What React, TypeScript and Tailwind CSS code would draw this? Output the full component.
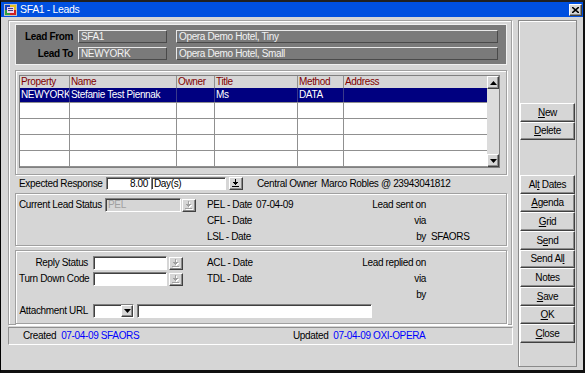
import React from "react";

const raised =
  "bg-[#d6d6d6] border border-t-white border-l-white border-r-[#404040] border-b-[#404040] shadow-[inset_-1px_-1px_0_#8c8c8c]";
const sunken =
  "border border-t-[#808080] border-l-[#808080] border-r-white border-b-white shadow-[inset_1px_1px_0_#404040]";
const etched =
  "border border-[#a0a0a0] shadow-[inset_1px_1px_0_#ffffff,1px_1px_0_#ffffff]";

function DropArrow({ disabled }: { disabled?: boolean }) {
  const c = disabled ? "#a0a0a0" : "#000000";
  return (
    <svg width="8" height="9" viewBox="0 0 8 9">
      {disabled && (
        <g fill="#ffffff" transform="translate(1,1)">
          <rect x="3" y="0" width="1" height="3" />
          <rect x="1" y="3" width="5" height="1" />
          <rect x="2" y="4" width="3" height="1" />
          <rect x="3" y="5" width="1" height="1" />
          <rect x="0" y="7" width="7" height="1" />
        </g>
      )}
      <g fill={c}>
        <rect x="3" y="0" width="1" height="3" />
        <rect x="1" y="3" width="5" height="1" />
        <rect x="2" y="4" width="3" height="1" />
        <rect x="3" y="5" width="1" height="1" />
        <rect x="0" y="7" width="7" height="1" />
      </g>
    </svg>
  );
}

function DropBtn({ disabled }: { disabled?: boolean }) {
  return (
    <div className={`${raised} w-[14px] h-[13px] flex items-center justify-center shrink-0`}>
      <DropArrow disabled={disabled} />
    </div>
  );
}

function Tri({ up }: { up?: boolean }) {
  return (
    <svg width="7" height="4" viewBox="0 0 7 4">
      <path d={up ? "M3.5 0L7 4H0Z" : "M0 0H7L3.5 4Z"} fill="#000" />
    </svg>
  );
}

function Btn({ children, h }: { children: React.ReactNode; h: string }) {
  return (
    <div className={`${raised} ${h} w-[55px] flex items-center justify-center text-black`}>
      <span>{children}</span>
    </div>
  );
}

const colW = ["w-[50px]", "w-[107px]", "w-[38px]", "w-[83px]", "w-[46px]", "w-[143px]"];
const heads = ["Property", "Name", "Owner", "Title", "Method", "Address"];
const sel = ["NEWYORK", "Stefanie Test Piennak", "", "Ms", "DATA", ""];

export default function App() {
  return (
    <div className="w-[585px] h-[373px] bg-[#d6d6d6] border-l border-l-black border-r-2 border-r-[#101010] border-t-2 border-t-[#202020] border-b-[3px] border-b-[#101010] overflow-hidden font-['Liberation_Sans',Arial,sans-serif] text-[10px] tracking-[-0.35px] leading-none text-black whitespace-nowrap">
      {/* Title bar */}
      <div className="h-[15px] bg-[#0050e0] flex items-center pl-[3px] pr-[1px]">
        <svg width="13" height="12" viewBox="0 0 13 12" className="shrink-0">
          <rect x="0" y="0" width="13" height="12" fill="#c0c0c0" />
          <rect x="1" y="1" width="5" height="5" fill="#1040c0" />
          <rect x="6" y="1" width="6" height="5" fill="#e0c020" />
          <rect x="1" y="6" width="5" height="5" fill="#30a040" />
          <rect x="6" y="6" width="6" height="5" fill="#d02020" />
          <rect x="3" y="3" width="7" height="6" fill="#f0d0f0" />
          <rect x="4" y="4" width="5" height="1" fill="#404080" />
          <rect x="4" y="6" width="5" height="1" fill="#404080" />
        </svg>
        <span className="ml-[3px] text-white text-[10.5px]">SFA1 - Leads</span>
        <div className="flex-1" />
        <div className={`${raised} w-[13px] h-[12px] flex items-center justify-center`}>
          <svg width="7" height="6" viewBox="0 0 7 6">
            <path d="M0 0L7 6M7 0L0 6" stroke="#000" strokeWidth="1.6" />
          </svg>
        </div>
      </div>

      {/* Body */}
      <div className="flex pt-[3px] pl-[7px]">
        {/* Left column */}
        <div className="w-[504px] flex flex-col">
          <div className={`${etched} h-[305px] pt-[3px] pl-[6px]`}>
            {/* Header */}
            <div className="w-[492px] h-[41px] bg-[#7a7a7a] border border-[#f0f0f0] pt-[5px] flex flex-col gap-[4px]">
              {[
                ["Lead From", "SFA1", "Opera Demo Hotel, Tiny"],
                ["Lead To", "NEWYORK", "Opera Demo Hotel, Small"],
              ].map(([l, a, b]) => (
                <div key={l} className="flex items-center h-[13px]">
                  <div className="w-[57px] text-right font-bold text-black">{l}</div>
                  <div className="ml-[5px] w-[89px] h-[13px] border border-t-[#e8e8e8] border-l-[#e8e8e8] border-r-[#4a4a4a] border-b-[#4a4a4a] text-[#f2f2f2] pl-[2px] flex items-center">
                    {a}
                  </div>
                  <div className="ml-[9px] w-[322px] h-[13px] border border-t-[#e8e8e8] border-l-[#e8e8e8] border-r-[#4a4a4a] border-b-[#4a4a4a] text-[#f2f2f2] pl-[2px] flex items-center">
                    {b}
                  </div>
                </div>
              ))}
            </div>

            {/* Grid panel */}
            <div className={`${etched} mt-[5px] w-[492px] h-[105px] pt-[4px] pl-[3px]`}>
              <div className="w-[481px] h-[93px] border border-[#808080] bg-white flex overflow-hidden">
                <div className="w-[467px] flex flex-col">
                  <div className="h-[13px] flex bg-[#d6d6d6]">
                    {heads.map((h, i) => (
                      <div
                        key={h}
                        className={`${colW[i]} ${i < 5 ? "border-r border-r-[#909090]" : ""} h-full pl-[1px] text-[#800000] flex items-center`}
                      >
                        {h}
                      </div>
                    ))}
                  </div>
                  <div className="h-[16px] flex bg-[#000080] border-b border-b-[#909090]">
                    {sel.map((t, i) => (
                      <div
                        key={i}
                        className={`${colW[i]} ${i < 5 ? "border-r border-r-[#3a3a8a]" : ""} h-full pl-[1px] text-white flex items-center overflow-hidden`}
                      >
                        {t}
                      </div>
                    ))}
                  </div>
                  {[0, 1, 2, 3].map((r) => (
                    <div key={r} className="h-[16px] shrink-0 flex border-b border-b-[#909090]">
                      {colW.map((w, i) => (
                        <div key={i} className={`${w} ${i < 5 ? "border-r border-r-[#909090]" : ""} h-full`} />
                      ))}
                    </div>
                  ))}
                </div>
                <div className="w-[13px] flex flex-col bg-[#dcdcdc]">
                  <div className={`${raised} h-[13px] flex items-center justify-center`}>
                    <Tri up />
                  </div>
                  <div className="flex-1" />
                  <div className={`${raised} h-[13px] flex items-center justify-center`}>
                    <Tri />
                  </div>
                </div>
              </div>
            </div>

            {/* Expected response */}
            <div className="mt-[2px] h-[13px] flex items-center pl-[4px]">
              <div className="w-[87px]">Expected Response</div>
              <div className={`${sunken} bg-white w-[45px] h-[13px] flex items-center justify-end pr-[2px]`}>8.00</div>
              <div className={`${sunken} bg-white w-[75px] h-[13px] flex items-center pl-[2px]`}>Day(s)</div>
              <div className="ml-[3px]">
                <DropBtn />
              </div>
              <div className="ml-[14px] w-[64px]">Central Owner</div>
              <div>Marco Robles @ 23943041812</div>
            </div>

            {/* Lead status panel */}
            <div className={`${etched} mt-[3px] w-[492px] h-[53px] pt-[3px] pl-[3px] flex flex-col`}>
              {[
                ["PEL - Date", "07-04-09", "Lead sent on", ""],
                ["CFL - Date", "", "via", ""],
                ["LSL - Date", "", "by", "SFAORS"],
              ].map(([b, bv, c, cv], r) => (
                <div key={r} className="h-[16px] flex items-center">
                  <div className="w-[188px] flex items-center">
                    {r === 0 && (
                      <>
                        <div className="w-[86px]">Current Lead Status</div>
                        <div className={`${sunken} bg-[#d6d6d6] w-[76px] h-[14px] flex items-center pl-[2px] text-[#a0a0a0]`}>
                          PEL
                        </div>
                        <div className="ml-[1px]">
                          <DropBtn disabled />
                        </div>
                      </>
                    )}
                  </div>
                  <div className="w-[110px] flex items-center">
                    <div className="w-[49px]">{b}</div>
                    <div>{bv}</div>
                  </div>
                  <div className="w-[109px] text-right">{c}</div>
                  <div className="ml-[5px]">{cv}</div>
                </div>
              ))}
            </div>

            {/* Reply panel */}
            <div className={`${etched} mt-[4px] w-[492px] h-[74px] pt-[4px] pl-[3px] flex flex-col`}>
              {[
                ["Reply Status", "ACL - Date", "Lead replied on"],
                ["Turn Down Code", "TDL - Date", "via"],
                ["", "", "by"],
              ].map(([a, b, c], r) => (
                <div key={r} className="h-[16px] flex items-center">
                  <div className="w-[188px] flex items-center">
                    {a && (
                      <>
                        <div className="w-[69px] text-right">{a}</div>
                        <div className={`${sunken} bg-white ml-[5px] w-[74px] h-[14px]`} />
                        <div className="ml-[2px]">
                          <DropBtn disabled />
                        </div>
                      </>
                    )}
                  </div>
                  <div className="w-[110px]">{b}</div>
                  <div className="w-[109px] text-right">{c}</div>
                </div>
              ))}
              <div className="h-[16px] flex items-center">
                <div className="w-[69px] text-right">Attachment URL</div>
                <div className={`${sunken} bg-white ml-[5px] w-[41px] h-[14px] flex justify-end`}>
                  <div className={`${raised} w-[12px] h-full flex items-center justify-center`}>
                    <Tri />
                  </div>
                </div>
                <div className={`${sunken} bg-white ml-[3px] w-[235px] h-[14px]`} />
              </div>
            </div>
          </div>

          {/* Footer */}
          <div className="mt-[2px] h-[18px] w-[505px] border border-t-[#909090] border-l-[#909090] border-r-white border-b-white flex items-center pl-[14px]">
            <div className="w-[270px] flex items-center">
              <span>Created</span>
              <span className="ml-[5px] text-[#0000ff]">07-04-09 SFAORS</span>
            </div>
            <span>Updated</span>
            <span className="ml-[5px] text-[#0000ff]">07-04-09 OXI-OPERA</span>
          </div>
        </div>

        {/* Right button panel */}
        <div className="ml-[6px] w-[59px] h-[347px] border border-[#8a8a8a] shadow-[inset_1px_1px_0_#ffffff] pl-[1px] pt-[82px] flex flex-col">
          <Btn h="h-[19px]">
            <u>N</u>ew
          </Btn>
          <Btn h="h-[18px]">
            <u>D</u>elete
          </Btn>
          <div className="h-[35px]" />
          <Btn h="h-[19px]">
            Al<u>t</u> Dates
          </Btn>
          <Btn h="h-[18px]">
            <u>A</u>genda
          </Btn>
          <Btn h="h-[19px]">
            <u>G</u>rid
          </Btn>
          <Btn h="h-[19px]">
            S<u>e</u>nd
          </Btn>
          <Btn h="h-[18px]">
            Send Al<u>l</u>
          </Btn>
          <Btn h="h-[19px]">Notes</Btn>
          <Btn h="h-[19px]">
            <u>S</u>ave
          </Btn>
          <Btn h="h-[18px]">
            <u>O</u>K
          </Btn>
          <Btn h="h-[19px]">
            <u>C</u>lose
          </Btn>
        </div>
      </div>
    </div>
  );
}
